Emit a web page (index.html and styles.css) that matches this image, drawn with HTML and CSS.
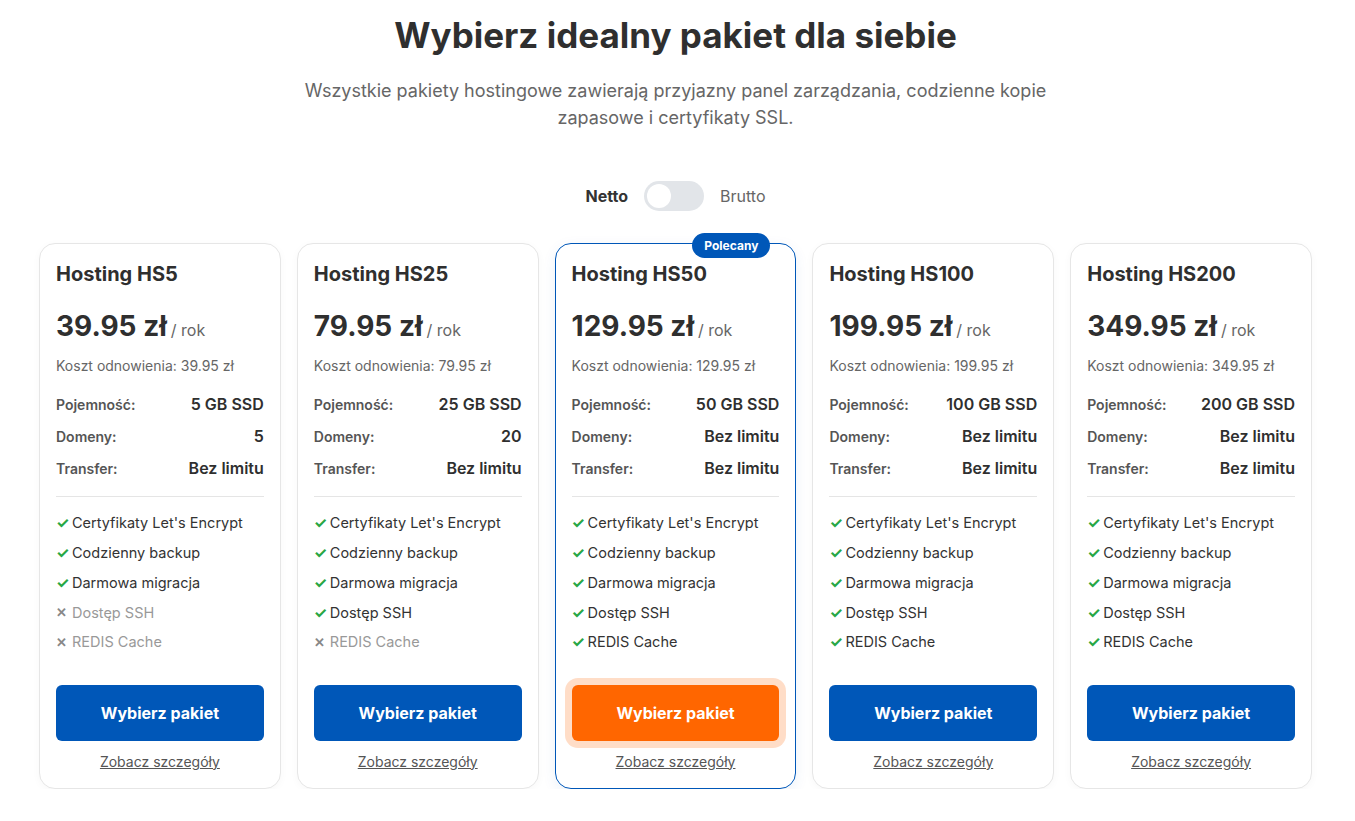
FILE: index.html
```html
<!DOCTYPE html>
<html lang="pl">
<head>
<meta charset="utf-8">
<title>Pakiety hostingowe</title>
<link rel="stylesheet" href="styles.css">
</head>
<body>
<main class="page">
  <h1 class="title">Wybierz idealny pakiet dla siebie</h1>
  <p class="subtitle">Wszystkie pakiety hostingowe zawierają przyjazny panel zarządzania, codzienne kopie zapasowe i certyfikaty SSL.</p>

  <div class="toggle-row">
    <span class="toggle-label active">Netto</span>
    <span class="switch"><span class="knob"></span></span>
    <span class="toggle-label">Brutto</span>
  </div>

  <div class="plans">
    <div class="card">
      <h2 class="card-title">Hosting HS5</h2>
      <div class="price"><span class="amount">39.95 zł</span><span class="period">/ rok</span></div>
      <div class="renew">Koszt odnowienia: 39.95 zł</div>
      <div class="specs">
        <div class="spec"><span class="spec-label">Pojemność:</span><span class="spec-value">5 GB SSD</span></div>
        <div class="spec"><span class="spec-label">Domeny:</span><span class="spec-value">5</span></div>
        <div class="spec"><span class="spec-label">Transfer:</span><span class="spec-value">Bez limitu</span></div>
      </div>
      <ul class="features">
        <li class="yes"><span class="ico">✓</span>Certyfikaty Let's Encrypt</li>
        <li class="yes"><span class="ico">✓</span>Codzienny backup</li>
        <li class="yes"><span class="ico">✓</span>Darmowa migracja</li>
        <li class="no"><span class="ico">✕</span>Dostęp SSH</li>
        <li class="no"><span class="ico">✕</span>REDIS Cache</li>
      </ul>
      <a class="btn" href="#">Wybierz pakiet</a>
      <a class="details" href="#">Zobacz szczegóły</a>
    </div>

    <div class="card">
      <h2 class="card-title">Hosting HS25</h2>
      <div class="price"><span class="amount">79.95 zł</span><span class="period">/ rok</span></div>
      <div class="renew">Koszt odnowienia: 79.95 zł</div>
      <div class="specs">
        <div class="spec"><span class="spec-label">Pojemność:</span><span class="spec-value">25 GB SSD</span></div>
        <div class="spec"><span class="spec-label">Domeny:</span><span class="spec-value">20</span></div>
        <div class="spec"><span class="spec-label">Transfer:</span><span class="spec-value">Bez limitu</span></div>
      </div>
      <ul class="features">
        <li class="yes"><span class="ico">✓</span>Certyfikaty Let's Encrypt</li>
        <li class="yes"><span class="ico">✓</span>Codzienny backup</li>
        <li class="yes"><span class="ico">✓</span>Darmowa migracja</li>
        <li class="yes"><span class="ico">✓</span>Dostęp SSH</li>
        <li class="no"><span class="ico">✕</span>REDIS Cache</li>
      </ul>
      <a class="btn" href="#">Wybierz pakiet</a>
      <a class="details" href="#">Zobacz szczegóły</a>
    </div>

    <div class="card featured">
      <span class="badge">Polecany</span>
      <h2 class="card-title">Hosting HS50</h2>
      <div class="price"><span class="amount">129.95 zł</span><span class="period">/ rok</span></div>
      <div class="renew">Koszt odnowienia: 129.95 zł</div>
      <div class="specs">
        <div class="spec"><span class="spec-label">Pojemność:</span><span class="spec-value">50 GB SSD</span></div>
        <div class="spec"><span class="spec-label">Domeny:</span><span class="spec-value">Bez limitu</span></div>
        <div class="spec"><span class="spec-label">Transfer:</span><span class="spec-value">Bez limitu</span></div>
      </div>
      <ul class="features">
        <li class="yes"><span class="ico">✓</span>Certyfikaty Let's Encrypt</li>
        <li class="yes"><span class="ico">✓</span>Codzienny backup</li>
        <li class="yes"><span class="ico">✓</span>Darmowa migracja</li>
        <li class="yes"><span class="ico">✓</span>Dostęp SSH</li>
        <li class="yes"><span class="ico">✓</span>REDIS Cache</li>
      </ul>
      <a class="btn btn-orange" href="#">Wybierz pakiet</a>
      <a class="details" href="#">Zobacz szczegóły</a>
    </div>

    <div class="card">
      <h2 class="card-title">Hosting HS100</h2>
      <div class="price"><span class="amount">199.95 zł</span><span class="period">/ rok</span></div>
      <div class="renew">Koszt odnowienia: 199.95 zł</div>
      <div class="specs">
        <div class="spec"><span class="spec-label">Pojemność:</span><span class="spec-value">100 GB SSD</span></div>
        <div class="spec"><span class="spec-label">Domeny:</span><span class="spec-value">Bez limitu</span></div>
        <div class="spec"><span class="spec-label">Transfer:</span><span class="spec-value">Bez limitu</span></div>
      </div>
      <ul class="features">
        <li class="yes"><span class="ico">✓</span>Certyfikaty Let's Encrypt</li>
        <li class="yes"><span class="ico">✓</span>Codzienny backup</li>
        <li class="yes"><span class="ico">✓</span>Darmowa migracja</li>
        <li class="yes"><span class="ico">✓</span>Dostęp SSH</li>
        <li class="yes"><span class="ico">✓</span>REDIS Cache</li>
      </ul>
      <a class="btn" href="#">Wybierz pakiet</a>
      <a class="details" href="#">Zobacz szczegóły</a>
    </div>

    <div class="card">
      <h2 class="card-title">Hosting HS200</h2>
      <div class="price"><span class="amount">349.95 zł</span><span class="period">/ rok</span></div>
      <div class="renew">Koszt odnowienia: 349.95 zł</div>
      <div class="specs">
        <div class="spec"><span class="spec-label">Pojemność:</span><span class="spec-value">200 GB SSD</span></div>
        <div class="spec"><span class="spec-label">Domeny:</span><span class="spec-value">Bez limitu</span></div>
        <div class="spec"><span class="spec-label">Transfer:</span><span class="spec-value">Bez limitu</span></div>
      </div>
      <ul class="features">
        <li class="yes"><span class="ico">✓</span>Certyfikaty Let's Encrypt</li>
        <li class="yes"><span class="ico">✓</span>Codzienny backup</li>
        <li class="yes"><span class="ico">✓</span>Darmowa migracja</li>
        <li class="yes"><span class="ico">✓</span>Dostęp SSH</li>
        <li class="yes"><span class="ico">✓</span>REDIS Cache</li>
      </ul>
      <a class="btn" href="#">Wybierz pakiet</a>
      <a class="details" href="#">Zobacz szczegóły</a>
    </div>
  </div>
</main>
</body>
</html>
```

FILE: styles.css
```css
* { box-sizing: border-box; }

html, body {
  margin: 0;
  padding: 0;
  background: #ffffff;
}

body {
  font-family: Inter, "Noto Sans", "Liberation Sans", sans-serif;
  color: #333333;
}

.page {
  width: 1273px;
  margin: 0 0 0 39px;
  padding-top: 13px;
  display: flex;
  flex-direction: column;
  align-items: center;
}

.title {
  margin: 0;
  font-size: 35px;
  line-height: 44px;
  font-weight: 700;
  color: #2f2f2f;
  text-align: center;
}

.subtitle {
  margin: 20px 0 0;
  max-width: 760px;
  font-size: 18px;
  line-height: 27px;
  color: #666666;
  text-align: center;
}

.toggle-row {
  margin-top: 50px;
  display: flex;
  align-items: center;
  gap: 16px;
  height: 30px;
}

.toggle-label {
  font-size: 16px;
  color: #666666;
}

.toggle-label.active {
  font-weight: 700;
  color: #333333;
}

.switch {
  width: 60px;
  height: 30px;
  border-radius: 15px;
  background: #e2e5e9;
  display: flex;
  align-items: center;
  padding: 0 3px;
}

.knob {
  width: 24px;
  height: 24px;
  border-radius: 50%;
  background: #ffffff;
}

.plans {
  margin-top: 32px;
  width: 100%;
  display: grid;
  grid-template-columns: repeat(5, 1fr);
  gap: 16px;
}

.card {
  position: relative;
  background: #ffffff;
  border: 1px solid #e6e6e6;
  border-radius: 16px;
  padding: 16px 16px 16px;
  display: flex;
  flex-direction: column;
  box-shadow: 0 2px 8px rgba(0, 0, 0, 0.03);
}

.card.featured {
  border-color: #0057b8;
  box-shadow: 0 4px 14px rgba(0, 87, 184, 0.08);
}

.badge {
  position: absolute;
  top: -11px;
  right: 25px;
  height: 25px;
  padding: 0 12px;
  border-radius: 13px;
  background: #0057b8;
  color: #ffffff;
  font-size: 12px;
  font-weight: 700;
  line-height: 25px;
}

.card-title {
  margin: 0;
  font-size: 20px;
  line-height: 28px;
  font-weight: 700;
  color: #2f2f2f;
}

.price {
  margin-top: 20px;
  display: flex;
  align-items: baseline;
  gap: 4px;
  height: 36px;
}

.amount {
  font-size: 28px;
  line-height: 36px;
  font-weight: 700;
  color: #2f2f2f;
}

.period {
  font-size: 16px;
  color: #666666;
}

.renew {
  margin-top: 12px;
  font-size: 14px;
  line-height: 20px;
  color: #666666;
}

.specs {
  margin-top: 12px;
  padding-bottom: 12px;
  border-bottom: 1px solid #e5e5e5;
}

.spec {
  display: flex;
  justify-content: space-between;
  align-items: center;
  height: 32px;
}

.spec-label {
  font-size: 14px;
  font-weight: 600;
  color: #555555;
}

.spec-value {
  font-size: 16px;
  font-weight: 600;
  color: #2f2f2f;
}

.features {
  list-style: none;
  margin: 11px 0 0;
  padding: 0;
}

.features li {
  height: 29.75px;
  display: flex;
  align-items: center;
  font-size: 14.5px;
  color: #333333;
}

.features .ico {
  width: 16px;
  font-size: 15px;
  font-weight: 700;
}

.features .yes .ico {
  color: #28a745;
}

.features .no {
  color: #999999;
}

.features .no .ico {
  color: #888888;
  font-size: 13px;
}

.btn {
  margin-top: 28px;
  height: 56px;
  border-radius: 6px;
  background: #0057b8;
  color: #ffffff;
  font-size: 16px;
  font-weight: 700;
  text-decoration: none;
  display: flex;
  align-items: center;
  justify-content: center;
}

.btn-orange {
  background: #ff6600;
  box-shadow: 0 0 0 7px rgba(255, 102, 0, 0.22);
}

.details {
  margin-top: 11px;
  align-self: center;
  font-size: 14px;
  line-height: 20px;
  color: #555555;
  text-decoration: underline;
}
```
